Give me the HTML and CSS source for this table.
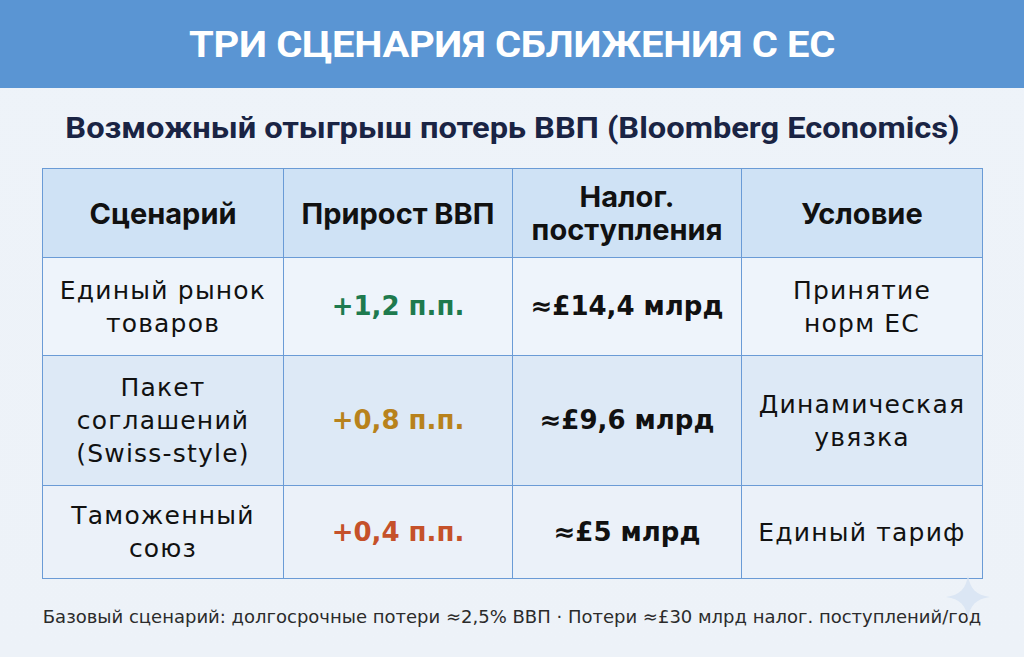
FILE: index.html
```html
<!DOCTYPE html>
<html lang="ru">
<head>
<meta charset="utf-8">
<link rel="stylesheet" href="styles.css">
</head>
<body>
<header class="banner"><h1 class="title">ТРИ СЦЕНАРИЯ СБЛИЖЕНИЯ С ЕС</h1></header>
<main class="content">
  <h2 class="subtitle"><span class="subtitle-text">Возможный отыгрыш потерь ВВП (Bloomberg Economics)</span></h2>
  <table class="grid">
    <colgroup><col class="c1"><col class="c2"><col class="c3"><col class="c4"></colgroup>
    <thead>
      <tr class="row-head"><th>Сценарий</th><th>Прирост ВВП</th><th>Налог.<br>поступления</th><th>Условие</th></tr>
    </thead>
    <tbody>
      <tr class="row-a"><td>Единый рынок<br>товаров</td><td class="val green">+1,2 п.п.</td><td class="val">≈£14,4 млрд</td><td>Принятие<br>норм ЕС</td></tr>
      <tr class="row-b"><td>Пакет<br>соглашений<br>(Swiss-style)</td><td class="val gold">+0,8 п.п.</td><td class="val">≈£9,6 млрд</td><td>Динамическая<br>увязка</td></tr>
      <tr class="row-c"><td>Таможенный<br>союз</td><td class="val red">+0,4 п.п.</td><td class="val">≈£5 млрд</td><td>Единый тариф</td></tr>
    </tbody>
  </table>
  <p class="note">Базовый сценарий: долгосрочные потери ≈2,5% ВВП · Потери ≈£30 млрд налог. поступлений/год</p>
  <svg class="sparkle" width="48" height="48" viewBox="0 0 48 48"><path d="M24 2 C26 16 32 22 46 24 C32 26 26 32 24 46 C22 32 16 26 2 24 C16 22 22 16 24 2 Z" fill="#dbe6f4"/></svg>
</main>
</body>
</html>
```
FILE: styles.css
```css
* { box-sizing: border-box; }
html, body { margin: 0; padding: 0; }
body {
  width: 1024px;
  height: 657px;
  overflow: hidden;
  background: linear-gradient(180deg, #eef3f9 0%, #edf2f8 100%);
  font-family: "DejaVu Sans", "Open Sans", sans-serif;
  color: #111;
}
.banner {
  height: 88px;
  background: #5a95d3;
  display: flex;
  align-items: center;
  justify-content: center;
}
.title {
  margin: 0;
  font-family: Roboto, "Liberation Sans", sans-serif;
  font-weight: 700;
  font-size: 37px;
  letter-spacing: -0.3px;
  color: #fff;
  transform: scaleX(1.08);
}
.content {
  position: relative;
  padding: 0 42px;
}
.subtitle {
  margin: 0;
  height: 80px;
  display: flex;
  align-items: center;
  justify-content: center;
  font-family: Roboto, "Liberation Sans", sans-serif;
  font-weight: 700;
  font-size: 29px;
  color: #1a2444;
}
.subtitle-text {
  display: inline-block;
  transform: scaleX(1.125);
  white-space: nowrap;
}
.grid {
  width: 940px;
  border-collapse: collapse;
  table-layout: fixed;
}
.c1, .c4 { width: 241px; }
.c2, .c3 { width: 229px; }
.grid th, .grid td {
  border: 1.5px solid #6a9bd6;
  text-align: center;
  vertical-align: middle;
  padding: 0 2px;
}
.grid th {
  font-family: Inter, Roboto, sans-serif;
  font-weight: 700;
  font-size: 29px;
  line-height: 33px;
  color: #111;
}
.grid td {
  font-size: 25px;
  line-height: 33px;
  letter-spacing: 1.2px;
  color: #111;
}
.row-head { height: 89px; background: #cfe2f5; }
.row-a { height: 98px; background: #eef4fb; }
.row-b { height: 130px; background: #dde9f6; }
.row-c { height: 93px; background: #ebf1f9; }
.grid td.val { font-weight: 700; font-size: 26px; letter-spacing: 0; }
.grid td.green { color: #1e7a4e; }
.grid td.gold { color: #b8821c; }
.grid td.red { color: #c5512a; }
.note {
  margin: 27px 0 0;
  font-size: 18px;
  color: #2b2b2b;
  text-align: center;
  white-space: nowrap;
}
.sparkle {
  position: absolute;
  right: 32px;
  top: 485px;
}
```
